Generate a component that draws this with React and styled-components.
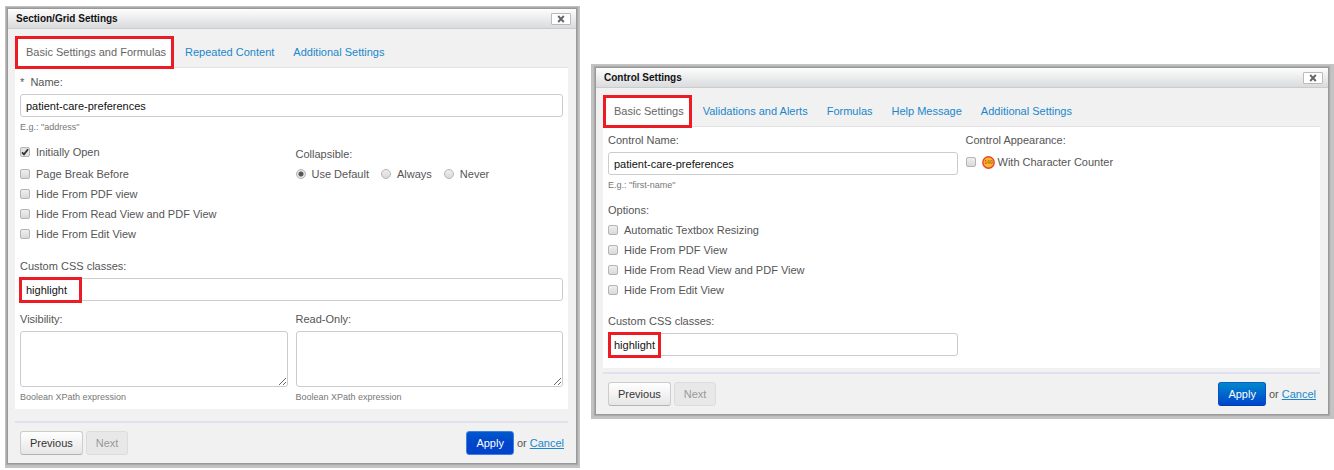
import React, { useId } from "react";
import styled, { createGlobalStyle, css } from "styled-components";

const GlobalStyle = createGlobalStyle`
  *, *::before, *::after { box-sizing: border-box; }
  body {
    margin: 0;
    background: #fff;
    color: #555;
    font: 11px/14px "Liberation Sans", Arial, sans-serif;
  }
  input, textarea, button { font: inherit; margin: 0; }
`;

const Page = styled.main`
  display: flex;
  align-items: flex-start;
  gap: 11px;
  padding: 6px 0 2px 5px;
`;

const Backdrop = styled.div`
  flex: ${(p) => p.$grow} 1 0;
  min-width: 0;
  margin-top: ${(p) => p.$top}px;
  padding: ${(p) => p.$pad};
  background: #c3c3c3;
`;

const Dialog = styled.section`
  border: 1px solid #999;
  background: #f1f1f1;
  box-shadow: 0 0 1px 1px #aaa;
`;

const Header = styled.header`
  display: flex;
  align-items: center;
  justify-content: space-between;
  height: 20px;
  padding: 0 5px 0 8px;
  border-bottom: 1px solid #ccc;
  background: linear-gradient(#fdfdfd, #d9dbdd);
`;

const Title = styled.h2`
  margin: 0;
  font-size: 10px;
  line-height: 14px;
  color: #111;
`;

const CloseButton = styled.button`
  display: flex;
  align-items: center;
  justify-content: center;
  width: 20px;
  height: 12px;
  padding: 0;
  border: 1px solid #bbb;
  border-radius: 1px;
  background: #fff;
`;

const Body = styled.form`
  padding: 7px 8px 8px 7px;
`;

const Tabs = styled.nav`
  display: flex;
  border-bottom: 1px solid #e2e2e2;
`;

const Tab = styled.a`
  padding: 6px 5px 5px 8px;
  border: 3px solid transparent;
  color: #1a87cc;
  text-decoration: none;
  ${(p) =>
    p.$active &&
    css`
      margin-bottom: -2px;
      padding-bottom: 7px;
      border-color: #ed1c24;
      background: #fff;
      color: #666;
    `}
`;

const Panel = styled.div`
  padding: ${(p) => p.$top}px 5px ${(p) => p.$bottom}px;
  margin-bottom: ${(p) => p.$gap}px;
  background: #fff;
`;

const Columns = styled.div`
  display: grid;
  grid-template-columns: 1fr 1fr;
  column-gap: 8px;
  margin-top: ${(p) => p.$top || 0}px;
`;

const FieldBox = styled.div`
  display: flex;
  flex-direction: column;
  margin-top: ${(p) => p.$top || 0}px;
`;

const Label = styled.label`
  margin-bottom: 5px;
  line-height: 14px;
`;

const Caption = styled.div`
  line-height: 20px;
  margin-top: ${(p) => p.$top || 0}px;
`;

const InputWrap = styled.div`
  position: relative;
`;

const fieldLook = css`
  display: block;
  width: 100%;
  border: 1px solid #ccc;
  border-radius: 3px;
  background: #fff;
  color: #111;
`;

const TextInput = styled.input`
  ${fieldLook}
  height: 23px;
  padding: 0 5px;
`;

const TextArea = styled.textarea`
  ${fieldLook}
  height: 56px;
  resize: both;
`;

const Highlight = styled.span`
  position: absolute;
  top: -1px;
  bottom: -2px;
  left: ${(p) => p.$left}px;
  width: ${(p) => p.$width}px;
  border: 3px solid #ed1c24;
  pointer-events: none;
`;

const Hint = styled.small`
  margin-top: 4px;
  font-size: 9px;
  line-height: 12px;
  color: #777;
`;

const CheckList = styled.div`
  display: flex;
  flex-direction: column;
  align-items: flex-start;
`;

const Choice = styled.label`
  display: flex;
  align-items: center;
  gap: 6px;
  height: 20px;
  margin-bottom: ${(p) => p.$after || 0}px;
`;

const Tick = styled.input`
  appearance: none;
  width: 10px;
  height: 10px;
  border: 1px solid #b5b5b5;
  background: linear-gradient(#eee, #d9d9d9);
  border-radius: ${(p) => (p.type === "radio" ? "50%" : "2px")};
  &[type="radio"]:checked {
    background: radial-gradient(circle, #555 0 2px, #e4e4e4 3px);
  }
  &[type="checkbox"]:checked {
    background: #e4e4e4
      url("data:image/svg+xml,%3Csvg xmlns='http://www.w3.org/2000/svg' viewBox='0 0 8 8'%3E%3Cpath d='M1 4.3 3 6.4 7 1.2' fill='none' stroke='%23333' stroke-width='1.8'/%3E%3C/svg%3E");
  }
`;

const Radios = styled.div`
  display: flex;
  gap: 12px;
`;

const IconLabel = styled.span`
  display: flex;
  align-items: center;
  gap: 3px;
`;

const Footer = styled.footer`
  display: flex;
  align-items: center;
  justify-content: space-between;
  padding: 8px 4px 0 5px;
  border-top: 2px solid #e0e0ef;
`;

const Group = styled.div`
  display: flex;
  align-items: center;
  gap: 3px;
`;

const Button = styled.button`
  height: 24px;
  padding: 0 9px;
  border: 1px solid #ccc;
  border-bottom-color: #b3b3b3;
  border-radius: 3px;
  background: linear-gradient(#fff, #e6e6e6);
  color: #333;
  &:disabled {
    border-color: #dcdcdc;
    background: #e8e8e8;
    color: #999;
  }
`;

const ApplyButton = styled(Button)`
  border-color: ${(p) => (p.$focused ? "#3f7fe0" : "#0560c8 #0550c4 #003fb0")};
  background: linear-gradient(${(p) => (p.$focused ? "#0059cc, #0044cc 50%" : "#0088cc")}, #0044cc);
  color: #fff;
`;

const Cancel = styled.a`
  color: #1a87cc;
`;

function CounterIcon() {
  return (
    <svg width="13" height="13" viewBox="0 0 13 13" aria-hidden="true">
      <circle cx="6.5" cy="6.5" r="5.7" fill="#fcb827" stroke="#ee402e" strokeWidth="1.4" />
      <text x="6.5" y="8.3" textAnchor="middle" fontSize="5" fontWeight="bold" fill="#b5651d">140</text>
    </svg>
  );
}

function DialogWindow({ title, tabs, children, grow, top, pad, panelTop, panelBottom, gap, focused }) {
  return (
    <Backdrop $grow={grow} $top={top} $pad={pad}>
      <Dialog>
        <Header>
          <Title>{title}</Title>
          <CloseButton type="button" aria-label="Close">
            <svg width="8" height="8" viewBox="0 0 8 8">
              <path d="M1.2 1 6.8 7M6.8 1 1.2 7" stroke="#666" strokeWidth="1.9" />
            </svg>
          </CloseButton>
        </Header>
        <Body>
          <Tabs>
            {tabs.map((t, i) => (
              <Tab key={t} href="#" $active={i === 0}>{t}</Tab>
            ))}
          </Tabs>
          <Panel $top={panelTop} $bottom={panelBottom} $gap={gap}>{children}</Panel>
          <Footer>
            <Group>
              <Button type="button">Previous</Button>
              <Button type="button" disabled>Next</Button>
            </Group>
            <Group>
              <ApplyButton type="button" $focused={focused}>Apply</ApplyButton>
              <span>or <Cancel href="#">Cancel</Cancel></span>
            </Group>
          </Footer>
        </Body>
      </Dialog>
    </Backdrop>
  );
}

function Field({ label, value, hint, top, area, mark }) {
  const id = useId();
  return (
    <FieldBox $top={top}>
      <Label htmlFor={id}>{label}</Label>
      {area ? (
        <TextArea id={id} />
      ) : (
        <InputWrap>
          <TextInput id={id} type="text" defaultValue={value} />
          {mark && <Highlight $left={mark.left} $width={mark.width} />}
        </InputWrap>
      )}
      {hint && <Hint>{hint}</Hint>}
    </FieldBox>
  );
}

function Check({ children, checked, after }) {
  return (
    <Choice $after={after}>
      <Tick type="checkbox" defaultChecked={checked} />
      {children}
    </Choice>
  );
}

function Radio({ children, checked }) {
  return (
    <Choice>
      <Tick type="radio" name="collapsible" defaultChecked={checked} />
      {children}
    </Choice>
  );
}

export default function App() {
  return (
    <>
      <GlobalStyle />
      <Page>
        <DialogWindow
          title="Section/Grid Settings"
          tabs={["Basic Settings and Formulas", "Repeated Content", "Additional Settings"]}
          grow={570} top={0} pad="2px 3px 4px 2px" panelTop={7} panelBottom={6} gap={12} focused
        >
          <Field label={"*\u00a0 Name:"} value="patient-care-preferences" hint={'E.g.: "address"'} />
          <Columns $top={9}>
            <CheckList>
              <Check checked after={2}>Initially Open</Check>
              <Check>Page Break Before</Check>
              <Check>Hide From PDF view</Check>
              <Check>Hide From Read View and PDF View</Check>
              <Check>Hide From Edit View</Check>
            </CheckList>
            <div>
              <Caption $top={2}>Collapsible:</Caption>
              <Radios>
                <Radio checked>Use Default</Radio>
                <Radio>Always</Radio>
                <Radio>Never</Radio>
              </Radios>
            </div>
          </Columns>
          <Field label="Custom CSS classes:" value="highlight" top={15} mark={{ left: -1, width: 63 }} />
          <Columns $top={11}>
            <Field label="Visibility:" area hint="Boolean XPath expression" />
            <Field label="Read-Only:" area hint="Boolean XPath expression" />
          </Columns>
        </DialogWindow>
        <DialogWindow
          title="Control Settings"
          tabs={["Basic Settings", "Validations and Alerts", "Formulas", "Help Message", "Additional Settings"]}
          grow={734} top={58} pad="3px 5px 4px 4px" panelTop={6} panelBottom={12} gap={4}
        >
          <Columns>
            <div>
              <Field label="Control Name:" value="patient-care-preferences" hint={'E.g.: "first-name"'} />
              <Caption $top={9}>Options:</Caption>
              <CheckList>
                <Check>Automatic Textbox Resizing</Check>
                <Check>Hide From PDF View</Check>
                <Check>Hide From Read View and PDF View</Check>
                <Check>Hide From Edit View</Check>
              </CheckList>
              <Field label="Custom CSS classes:" value="highlight" top={14} mark={{ left: 0, width: 53 }} />
            </div>
            <div>
              <Label as="div">Control Appearance:</Label>
              <Check>
                <IconLabel><CounterIcon />With Character Counter</IconLabel>
              </Check>
            </div>
          </Columns>
        </DialogWindow>
      </Page>
    </>
  );
}
